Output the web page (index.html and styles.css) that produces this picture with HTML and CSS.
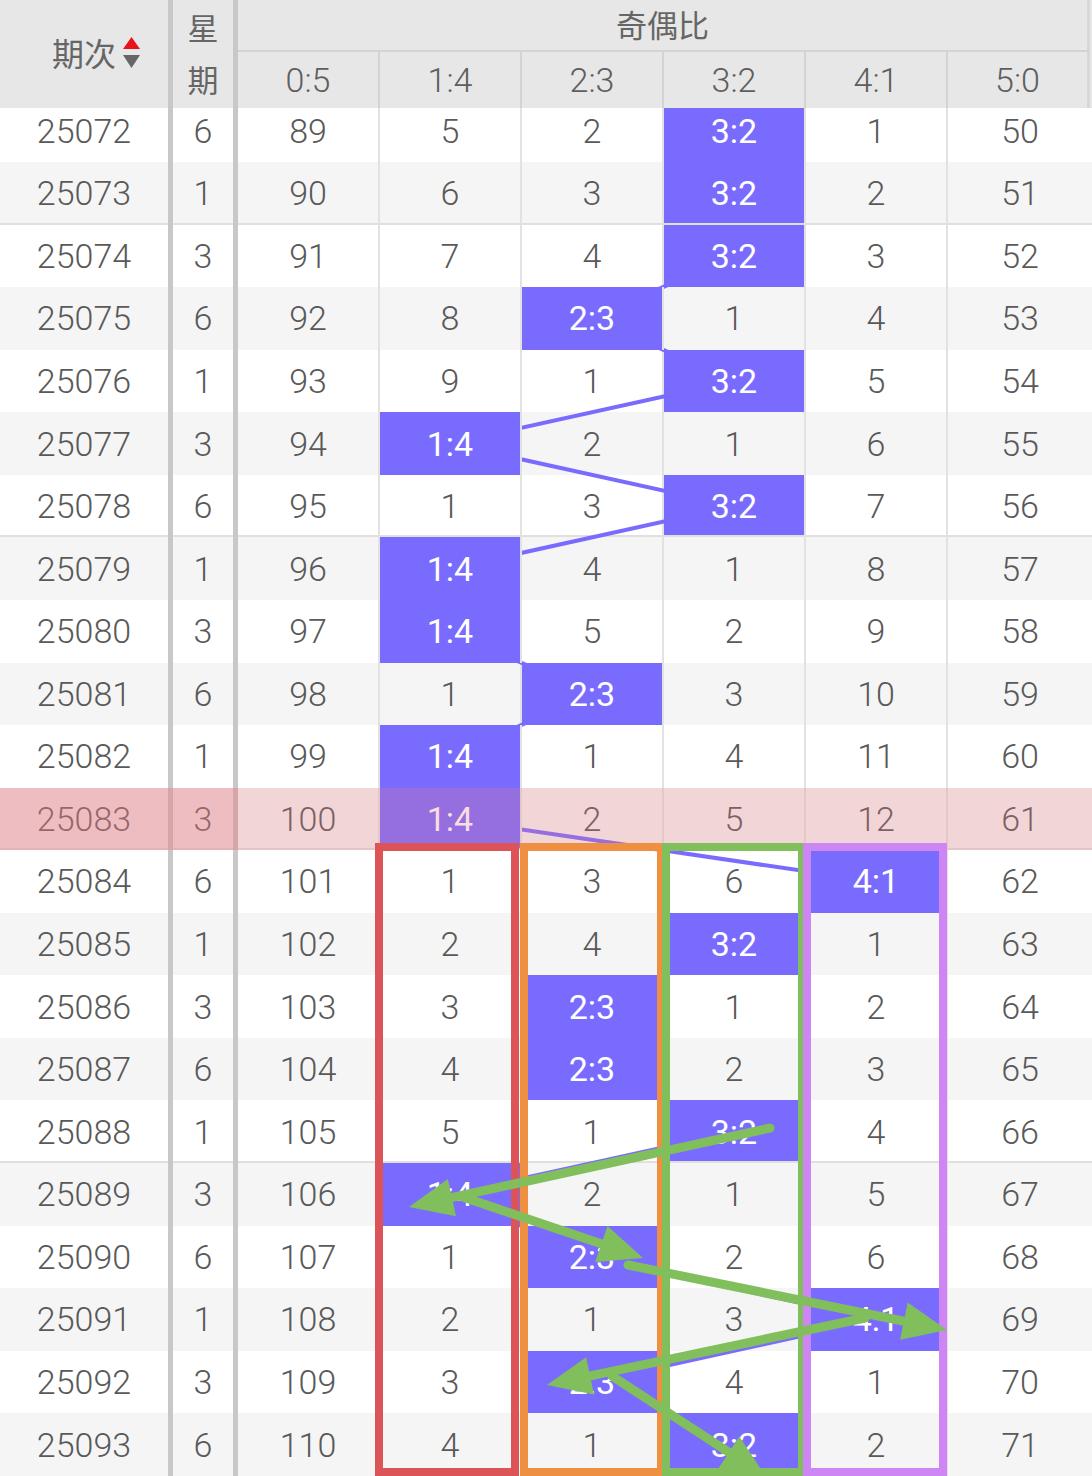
FILE: index.html
```html
<!DOCTYPE html>
<html lang="zh-CN">
<head>
<meta charset="utf-8">
<title>奇偶比走势</title>
<link rel="stylesheet" href="styles.css">
</head>
<body>
<div class="page">
  <div class="head">
    <div class="h-issue"><span class="h-issue-text">期次</span><svg class="sort" width="17" height="34" viewBox="0 0 17 34"><polygon points="8.5,0 17,12 0,12" fill="#e8141b"/><polygon points="0,18 17,18 8.5,31" fill="#666"/></svg></div>
    <div class="h-sep h-sep1"></div>
    <div class="h-week"><span>星</span><span>期</span></div>
    <div class="h-sep h-sep2"></div>
    <div class="h-group">奇偶比</div>
    <div class="h-col">0:5</div>
    <div class="h-col">1:4</div>
    <div class="h-col">2:3</div>
    <div class="h-col">3:2</div>
    <div class="h-col">4:1</div>
    <div class="h-col h-last">5:0</div>
  </div>

  <div class="body">
    <div class="row first"><div class="c">25072</div><div class="sep"></div><div class="c">6</div><div class="sep"></div><div class="c d">89</div><div class="c d">5</div><div class="c d">2</div><div class="c d hit">3:2</div><div class="c d">1</div><div class="c">50</div></div>
    <div class="row alt grp"><div class="c">25073</div><div class="sep"></div><div class="c">1</div><div class="sep"></div><div class="c d">90</div><div class="c d">6</div><div class="c d">3</div><div class="c d hit">3:2</div><div class="c d">2</div><div class="c">51</div></div>
    <div class="row"><div class="c">25074</div><div class="sep"></div><div class="c">3</div><div class="sep"></div><div class="c d">91</div><div class="c d">7</div><div class="c d">4</div><div class="c d hit">3:2</div><div class="c d">3</div><div class="c">52</div></div>
    <div class="row alt"><div class="c">25075</div><div class="sep"></div><div class="c">6</div><div class="sep"></div><div class="c d">92</div><div class="c d">8</div><div class="c d hit">2:3</div><div class="c d">1</div><div class="c d">4</div><div class="c">53</div></div>
    <div class="row"><div class="c">25076</div><div class="sep"></div><div class="c">1</div><div class="sep"></div><div class="c d">93</div><div class="c d">9</div><div class="c d">1</div><div class="c d hit">3:2</div><div class="c d">5</div><div class="c">54</div></div>
    <div class="row alt"><div class="c">25077</div><div class="sep"></div><div class="c">3</div><div class="sep"></div><div class="c d">94</div><div class="c d hit">1:4</div><div class="c d">2</div><div class="c d">1</div><div class="c d">6</div><div class="c">55</div></div>
    <div class="row grp"><div class="c">25078</div><div class="sep"></div><div class="c">6</div><div class="sep"></div><div class="c d">95</div><div class="c d">1</div><div class="c d">3</div><div class="c d hit">3:2</div><div class="c d">7</div><div class="c">56</div></div>
    <div class="row alt"><div class="c">25079</div><div class="sep"></div><div class="c">1</div><div class="sep"></div><div class="c d">96</div><div class="c d hit">1:4</div><div class="c d">4</div><div class="c d">1</div><div class="c d">8</div><div class="c">57</div></div>
    <div class="row"><div class="c">25080</div><div class="sep"></div><div class="c">3</div><div class="sep"></div><div class="c d">97</div><div class="c d hit">1:4</div><div class="c d">5</div><div class="c d">2</div><div class="c d">9</div><div class="c">58</div></div>
    <div class="row alt"><div class="c">25081</div><div class="sep"></div><div class="c">6</div><div class="sep"></div><div class="c d">98</div><div class="c d">1</div><div class="c d hit">2:3</div><div class="c d">3</div><div class="c d">10</div><div class="c">59</div></div>
    <div class="row"><div class="c">25082</div><div class="sep"></div><div class="c">1</div><div class="sep"></div><div class="c d">99</div><div class="c d hit">1:4</div><div class="c d">1</div><div class="c d">4</div><div class="c d">11</div><div class="c">60</div></div>
    <div class="row alt grp hl"><div class="c">25083</div><div class="sep"></div><div class="c">3</div><div class="sep"></div><div class="c d">100</div><div class="c d hit">1:4</div><div class="c d">2</div><div class="c d">5</div><div class="c d">12</div><div class="c">61</div></div>
    <div class="row"><div class="c">25084</div><div class="sep"></div><div class="c">6</div><div class="sep"></div><div class="c d">101</div><div class="c d">1</div><div class="c d">3</div><div class="c d">6</div><div class="c d hit">4:1</div><div class="c">62</div></div>
    <div class="row alt"><div class="c">25085</div><div class="sep"></div><div class="c">1</div><div class="sep"></div><div class="c d">102</div><div class="c d">2</div><div class="c d">4</div><div class="c d hit">3:2</div><div class="c d">1</div><div class="c">63</div></div>
    <div class="row"><div class="c">25086</div><div class="sep"></div><div class="c">3</div><div class="sep"></div><div class="c d">103</div><div class="c d">3</div><div class="c d hit">2:3</div><div class="c d">1</div><div class="c d">2</div><div class="c">64</div></div>
    <div class="row alt"><div class="c">25087</div><div class="sep"></div><div class="c">6</div><div class="sep"></div><div class="c d">104</div><div class="c d">4</div><div class="c d hit">2:3</div><div class="c d">2</div><div class="c d">3</div><div class="c">65</div></div>
    <div class="row grp"><div class="c">25088</div><div class="sep"></div><div class="c">1</div><div class="sep"></div><div class="c d">105</div><div class="c d">5</div><div class="c d">1</div><div class="c d hit">3:2</div><div class="c d">4</div><div class="c">66</div></div>
    <div class="row alt"><div class="c">25089</div><div class="sep"></div><div class="c">3</div><div class="sep"></div><div class="c d">106</div><div class="c d hit">1:4</div><div class="c d">2</div><div class="c d">1</div><div class="c d">5</div><div class="c">67</div></div>
    <div class="row"><div class="c">25090</div><div class="sep"></div><div class="c">6</div><div class="sep"></div><div class="c d">107</div><div class="c d">1</div><div class="c d hit">2:3</div><div class="c d">2</div><div class="c d">6</div><div class="c">68</div></div>
    <div class="row alt"><div class="c">25091</div><div class="sep"></div><div class="c">1</div><div class="sep"></div><div class="c d">108</div><div class="c d">2</div><div class="c d">1</div><div class="c d">3</div><div class="c d hit">4:1</div><div class="c">69</div></div>
    <div class="row"><div class="c">25092</div><div class="sep"></div><div class="c">3</div><div class="sep"></div><div class="c d">109</div><div class="c d">3</div><div class="c d hit">2:3</div><div class="c d">4</div><div class="c d">1</div><div class="c">70</div></div>
    <div class="row alt"><div class="c">25093</div><div class="sep"></div><div class="c">6</div><div class="sep"></div><div class="c d">110</div><div class="c d">4</div><div class="c d">1</div><div class="c d hit">3:2</div><div class="c d">2</div><div class="c">71</div></div>
  </div>

  <svg class="links" width="1092" height="1476" viewBox="0 0 1092 1476">
    <polyline fill="none" stroke="#7a6bff" stroke-width="4" stroke-linejoin="round" points="734,130.7 734,193.3 734,255.9 592,318.4 734,381.0 450,443.6 734,506.1 450,568.7 450,631.3 592,693.9 450,756.4 450,819.0 876,881.6 734,944.1 592,1006.7 592,1069.3 734,1131.9 450,1194.4 592,1257.0 876,1319.6 592,1382.1 734,1444.7"/>
  </svg>

  <div class="box box-red"></div>
  <div class="box box-orange"></div>
  <div class="box box-green"></div>
  <div class="box box-violet"></div>

  <svg class="arrows" width="1092" height="1476" viewBox="0 0 1092 1476">
    <defs>
      <marker id="head" markerUnits="userSpaceOnUse" orient="auto" markerWidth="80" markerHeight="80" refX="0" refY="0" viewBox="-40 -40 80 80" style="overflow:visible">
        <polygon points="-24,-19 20,0 -24,19" fill="#80bf5c"/>
      </marker>
    </defs>
    <g stroke="#80bf5c" stroke-width="9" stroke-linecap="round" fill="none">
      <line x1="770" y1="1128" x2="428.5" y2="1202.7" marker-end="url(#head)"/>
      <line x1="463" y1="1197" x2="624.1" y2="1251.6" marker-end="url(#head)"/>
      <line x1="628" y1="1265" x2="927.4" y2="1326" marker-end="url(#head)"/>
      <line x1="865" y1="1318" x2="566.6" y2="1380.9" marker-end="url(#head)"/>
      <line x1="612" y1="1376" x2="749" y2="1465.5" marker-end="url(#head)"/>
    </g>
  </svg>
</div>
</body>
</html>
```

FILE: styles.css
```css
* {
  box-sizing: border-box;
}

html, body {
  margin: 0;
  padding: 0;
  background: #ffffff;
}

body {
  font-family: Roboto, "Noto Sans CJK SC", sans-serif;
  font-weight: 300;
  color: #595959;
}

.page {
  position: relative;
  width: 1092px;
  height: 1476px;
  overflow: hidden;
}

/* ---------- header ---------- */
.head {
  display: grid;
  grid-template-columns: 168px 5px 60px 5px repeat(5, 142px) 144px;
  grid-template-rows: 52px 56px;
  background: #e7e7e7;
  color: #5e5e5e;
}

.h-issue {
  grid-column: 1;
  grid-row: 1 / 3;
  display: flex;
  align-items: center;
  justify-content: center;
  font-family: "Noto Sans CJK SC", sans-serif;
  font-weight: 400;
  font-size: 32px;
  color: #666666;
  padding-bottom: 4px;
}

.h-issue-text {
  line-height: 1;
}

.sort {
  display: block;
  margin-left: 7px;
  margin-right: -24px;
  margin-top: 4px;
}

.h-sep {
  grid-row: 1 / 3;
  background: #c8c8c8;
}

.h-sep1 { grid-column: 2; }
.h-sep2 { grid-column: 4; }

.h-week {
  grid-column: 3;
  grid-row: 1 / 3;
  display: flex;
  flex-direction: column;
  align-items: center;
  font-family: "Noto Sans CJK SC", sans-serif;
  font-weight: 400;
  font-size: 31px;
  color: #666666;
  line-height: 52px;
  padding-top: 1px;
}

.h-group {
  grid-column: 5 / 11;
  grid-row: 1;
  display: flex;
  align-items: center;
  justify-content: center;
  border-bottom: 2px solid #d3d3d3;
  border-right: 3px solid #d8d8d8;
  margin-right: 2px;
  font-family: "Noto Sans CJK SC", sans-serif;
  font-weight: 400;
  font-size: 31px;
  color: #666666;
  padding-bottom: 4px;
}

.h-col {
  grid-row: 2;
  display: flex;
  align-items: center;
  justify-content: center;
  border-right: 2px solid #d3d3d3;
  font-size: 34px;
}

.h-last {
  border-right: 3px solid #d8d8d8;
  margin-right: 2px;
}

/* ---------- body rows ---------- */
.row {
  display: grid;
  grid-template-columns: 168px 5px 60px 5px repeat(5, 142px) 144px;
  height: 62.571px;
  background: #ffffff;
  font-size: 34px;
}

.row.alt {
  background: #f5f5f5;
}

.row.first {
  height: 54px;
}

.row.first .c {
  padding-bottom: 8px;
}

.c {
  display: flex;
  align-items: center;
  justify-content: center;
  line-height: 1;
}

.d {
  border-right: 2px solid #e2e2e2;
}

.sep {
  background: #c8c8c8;
}

.grp .c {
  box-shadow: inset 0 -2px 0 #e0e0e0;
}

.hit {
  position: relative;
  z-index: 2;
  background: #7a6bff;
  color: #ffffff;
  font-weight: 400;
}

/* highlighted (current) row */
.row.hl {
  position: relative;
}

.row.hl::after,
.row.hl::before {
  content: "";
  position: absolute;
  top: 0;
  bottom: 0;
  background: rgba(232, 120, 128, 0.25);
  z-index: 3;
  pointer-events: none;
}

.row.hl::after {
  left: 0;
  right: 0;
}

.row.hl::before {
  left: 0;
  width: 238px;
}

/* ---------- overlays ---------- */
.links {
  position: absolute;
  left: 0;
  top: 0;
  z-index: 1;
  pointer-events: none;
}

.box {
  position: absolute;
  top: 843px;
  height: 633px;
  border: 8px solid;
  z-index: 4;
}

.box-red {
  left: 375px;
  width: 144px;
  border-color: #dc5458;
}

.box-orange {
  left: 520px;
  width: 145px;
  border-color: #ef8f42;
}

.box-green {
  left: 662px;
  width: 144px;
  border-color: #80bf5c;
}

.box-violet {
  left: 803px;
  width: 144px;
  border-color: #cd86f4;
}

.arrows {
  position: absolute;
  left: 0;
  top: 0;
  z-index: 5;
  pointer-events: none;
}
```
